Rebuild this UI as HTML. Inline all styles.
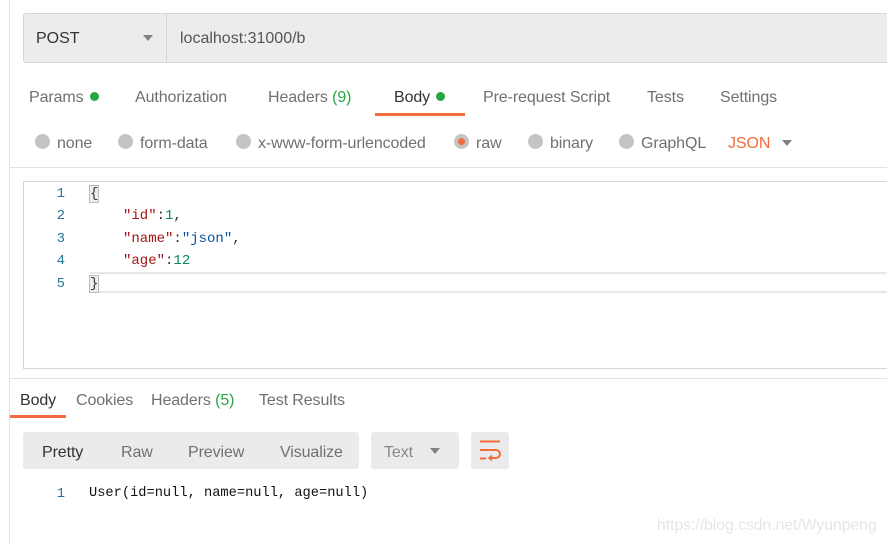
<!DOCTYPE html>
<html><head><meta charset="utf-8">
<style>
*{margin:0;padding:0;box-sizing:border-box}
body{width:887px;height:545px;background:#fff;font-family:"Liberation Sans",sans-serif;position:relative;overflow:hidden;color:#505050}
.a{position:absolute;white-space:nowrap}
.t{font-size:16px;color:#707070;letter-spacing:-0.1px}
.dot{display:inline-block;width:9px;height:9px;border-radius:50%;background:#26a644;margin-left:6px;vertical-align:1px}
.r{position:absolute;width:15px;height:15px;border-radius:50%;background:#c4c4c4}
.mono{font-family:"Liberation Mono","DejaVu Sans Mono",monospace;font-size:14px}
.ln{color:#237893;font-family:"Liberation Mono",monospace;font-size:14px;position:absolute;width:20px;text-align:right}
</style></head><body>
<div class="a" style="left:9px;top:0;width:1px;height:545px;background:#e2e2e2"></div>
<div class="a" style="left:23px;top:13px;width:870px;height:50px;background:#ececec;border:1px solid #d6d6d6;border-radius:3px"></div>
<div class="a" style="left:166px;top:14px;width:1px;height:48px;background:#d6d6d6"></div>
<div class="a" style="left:36px;top:30px;font-size:16px;color:#333">POST</div>
<div class="a" style="left:143px;top:35px;border-left:5px solid transparent;border-right:5px solid transparent;border-top:6px solid #808080"></div>
<div class="a" style="left:180px;top:30px;font-size:16px;color:#555">localhost:31000/b</div>
<div class="a t" style="left:29px;top:89px">Params<span class="dot"></span></div>
<div class="a t" style="left:135px;top:89px">Authorization</div>
<div class="a t" style="left:268px;top:89px">Headers <span style="color:#26a644">(9)</span></div>
<div class="a t" style="left:394px;top:89px;color:#333">Body<span class="dot"></span></div>
<div class="a" style="left:375px;top:113px;width:90px;height:3px;background:#f26b3a"></div>
<div class="a t" style="left:483px;top:89px">Pre-request Script</div>
<div class="a t" style="left:647px;top:89px">Tests</div>
<div class="a t" style="left:720px;top:89px">Settings</div>
<div class="r" style="left:35px;top:134px"></div><div class="a t" style="left:57px;top:135px">none</div>
<div class="r" style="left:118px;top:134px"></div><div class="a t" style="left:140px;top:135px">form-data</div>
<div class="r" style="left:236px;top:134px"></div><div class="a t" style="left:258px;top:135px">x-www-form-urlencoded</div>
<div class="r" style="left:454px;top:134px;background:#c4c4c4"><div style="position:absolute;left:4px;top:4px;width:7px;height:7px;border-radius:50%;background:#f26b3a"></div></div><div class="a t" style="left:476px;top:135px">raw</div>
<div class="r" style="left:528px;top:134px"></div><div class="a t" style="left:550px;top:135px">binary</div>
<div class="r" style="left:619px;top:134px"></div><div class="a t" style="left:641px;top:135px">GraphQL</div>
<div class="a t" style="left:728px;top:135px;color:#f26b3a">JSON</div>
<div class="a" style="left:782px;top:140px;border-left:5px solid transparent;border-right:5px solid transparent;border-top:6px solid #808080"></div>
<div class="a" style="left:10px;top:167px;width:877px;height:1px;background:#e2e2e2"></div>
<div class="a" style="left:23px;top:181px;width:870px;height:188px;border:1px solid #d6d6d6"></div>
<div class="a" style="left:90px;top:272px;width:797px;height:21px;border-top:2px solid #e8e8e8;border-bottom:2px solid #e8e8e8"></div>
<div class="ln" style="left:45px;top:186px">1</div>
<div class="ln" style="left:45px;top:208px">2</div>
<div class="ln" style="left:45px;top:231px">3</div>
<div class="ln" style="left:45px;top:253px">4</div>
<div class="ln" style="left:45px;top:276px">5</div>
<div class="a mono" style="left:90px;top:186px;color:#333;background:#eee;outline:1px solid #bbb">{</div>
<div class="a mono" style="left:123px;top:208px"><span style="color:#a31515">"id"</span><span style="color:#333">:</span><span style="color:#098658">1</span><span style="color:#333">,</span></div>
<div class="a mono" style="left:123px;top:231px"><span style="color:#a31515">"name"</span><span style="color:#333">:</span><span style="color:#0451a5">"json"</span><span style="color:#333">,</span></div>
<div class="a mono" style="left:123px;top:253px"><span style="color:#a31515">"age"</span><span style="color:#333">:</span><span style="color:#098658">12</span></div>
<div class="a mono" style="left:90px;top:276px;color:#333;background:#eee;outline:1px solid #bbb">}</div>
<div class="a" style="left:10px;top:378px;width:877px;height:1px;background:#e2e2e2"></div>
<div class="a t" style="left:20px;top:392px;color:#333">Body</div>
<div class="a" style="left:10px;top:415px;width:56px;height:3px;background:#f26b3a"></div>
<div class="a t" style="left:76px;top:392px">Cookies</div>
<div class="a t" style="left:151px;top:392px">Headers <span style="color:#26a644">(5)</span></div>
<div class="a t" style="left:259px;top:392px">Test Results</div>
<div class="a" style="left:23px;top:432px;width:336px;height:37px;background:#ebebeb;border-radius:3px"></div>
<div class="a t" style="left:42px;top:444px;color:#333">Pretty</div>
<div class="a t" style="left:121px;top:444px">Raw</div>
<div class="a t" style="left:188px;top:444px">Preview</div>
<div class="a t" style="left:280px;top:444px">Visualize</div>
<div class="a" style="left:371px;top:432px;width:88px;height:37px;background:#ebebeb;border-radius:3px"></div>
<div class="a t" style="left:384px;top:444px;color:#888">Text</div>
<div class="a" style="left:430px;top:448px;border-left:5px solid transparent;border-right:5px solid transparent;border-top:6px solid #808080"></div>
<div class="a" style="left:471px;top:432px;width:38px;height:37px;background:#ebebeb;border-radius:3px"></div>
<svg class="a" style="left:471px;top:432px" width="38" height="37" viewBox="0 0 38 37">
<g stroke="#f26b3a" stroke-width="2" fill="none">
<path d="M9 9.5H29"/><path d="M9 18H25a4 4 0 0 1 0 8H19"/><path d="M9 26.5H15"/>
<path d="M21 23.5l-3 2.5 3 2.5" stroke-width="1.6"/>
</g></svg>
<div class="ln" style="left:45px;top:486px">1</div>
<div class="a mono" style="left:89px;top:486px;color:#111;font-size:13.7px">User(id=null, name=null, age=null)</div>
<div class="a" style="left:657px;top:517px;font-size:15.7px;color:#e6e6e6">https://blog.csdn.net/Wyunpeng</div>
</body></html>
